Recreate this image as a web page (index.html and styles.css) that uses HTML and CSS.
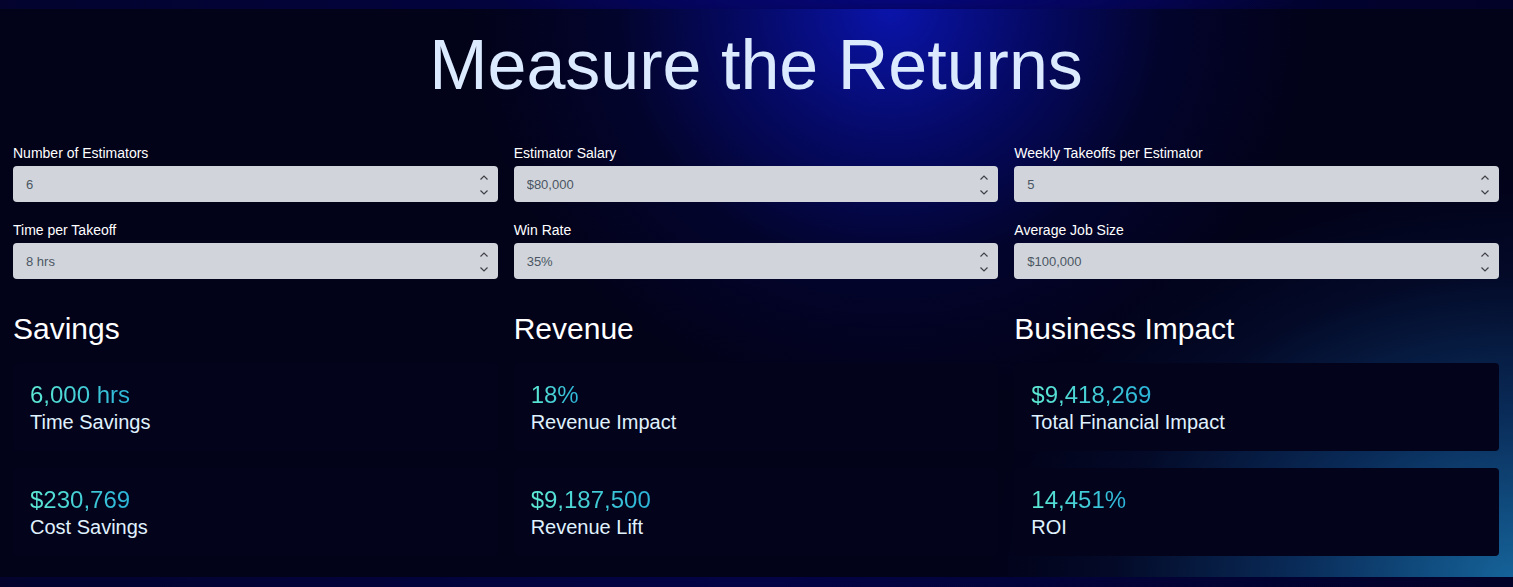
FILE: index.html
```html
<!DOCTYPE html>
<html lang="en">
<head>
<meta charset="utf-8">
<title>Measure the Returns</title>
<link rel="stylesheet" href="styles.css">
</head>
<body>
<section class="roi">
  <h1 class="title">Measure the Returns</h1>
  <div class="inputs">
    <label class="field"><span class="field-label">Number of Estimators</span>
      <span class="control"><input class="control-input" type="text" value="6" readonly><svg class="spin" width="10" height="26" viewBox="0 0 10 26"><path d="M1.5 8.5 L5 5 L8.5 8.5" /><path d="M1.5 19.5 L5 23 L8.5 19.5" /></svg></span></label>
    <label class="field"><span class="field-label">Estimator Salary</span>
      <span class="control"><input class="control-input" type="text" value="$80,000" readonly><svg class="spin" width="10" height="26" viewBox="0 0 10 26"><path d="M1.5 8.5 L5 5 L8.5 8.5" /><path d="M1.5 19.5 L5 23 L8.5 19.5" /></svg></span></label>
    <label class="field"><span class="field-label">Weekly Takeoffs per Estimator</span>
      <span class="control"><input class="control-input" type="text" value="5" readonly><svg class="spin" width="10" height="26" viewBox="0 0 10 26"><path d="M1.5 8.5 L5 5 L8.5 8.5" /><path d="M1.5 19.5 L5 23 L8.5 19.5" /></svg></span></label>
    <label class="field"><span class="field-label">Time per Takeoff</span>
      <span class="control"><input class="control-input" type="text" value="8 hrs" readonly><svg class="spin" width="10" height="26" viewBox="0 0 10 26"><path d="M1.5 8.5 L5 5 L8.5 8.5" /><path d="M1.5 19.5 L5 23 L8.5 19.5" /></svg></span></label>
    <label class="field"><span class="field-label">Win Rate</span>
      <span class="control"><input class="control-input" type="text" value="35%" readonly><svg class="spin" width="10" height="26" viewBox="0 0 10 26"><path d="M1.5 8.5 L5 5 L8.5 8.5" /><path d="M1.5 19.5 L5 23 L8.5 19.5" /></svg></span></label>
    <label class="field"><span class="field-label">Average Job Size</span>
      <span class="control"><input class="control-input" type="text" value="$100,000" readonly><svg class="spin" width="10" height="26" viewBox="0 0 10 26"><path d="M1.5 8.5 L5 5 L8.5 8.5" /><path d="M1.5 19.5 L5 23 L8.5 19.5" /></svg></span></label>
  </div>
  <div class="results">
    <div class="group">
      <h2 class="group-title">Savings</h2>
      <div class="card"><div class="card-value">6,000 hrs</div><div class="card-label">Time Savings</div></div>
      <div class="card"><div class="card-value">$230,769</div><div class="card-label">Cost Savings</div></div>
    </div>
    <div class="group">
      <h2 class="group-title">Revenue</h2>
      <div class="card"><div class="card-value">18%</div><div class="card-label">Revenue Impact</div></div>
      <div class="card"><div class="card-value">$9,187,500</div><div class="card-label">Revenue Lift</div></div>
    </div>
    <div class="group">
      <h2 class="group-title">Business Impact</h2>
      <div class="card"><div class="card-value">$9,418,269</div><div class="card-label">Total Financial Impact</div></div>
      <div class="card"><div class="card-value">14,451%</div><div class="card-label">ROI</div></div>
    </div>
  </div>
</section>
</body>
</html>
```

FILE: styles.css
```css
html, body {
  margin: 0;
  padding: 0;
}

body {
  font-family: "Liberation Sans", Arial, sans-serif;
  background:
    radial-gradient(ellipse 400px 30px at 900px 0, #06067a, transparent 100%),
    linear-gradient(to right, #03032e, #030346 50%, #020228);
  height: 587px;
  overflow: hidden;
  padding-top: 9px;
  box-sizing: border-box;
}

.roi {
  height: 568px;
  box-sizing: border-box;
  padding: 16px 14px 21px 13px;
  background:
    radial-gradient(ellipse 620px 470px at 100% 100%, rgba(22, 104, 160, 0.95) 0%, rgba(14, 70, 130, 0.6) 35%, rgba(6, 30, 80, 0.25) 65%, transparent 85%),
    radial-gradient(ellipse 420px 400px at 890px 0, rgba(10, 20, 170, 1) 0%, rgba(6, 12, 130, 0.7) 35%, rgba(4, 8, 80, 0.35) 65%, transparent 100%),
    #020219;
}

.title {
  margin: 0;
  text-align: center;
  font-weight: 400;
  font-size: 70px;
  line-height: 80px;
  color: #dbeafe;
}

.inputs {
  display: grid;
  grid-template-columns: repeat(3, 1fr);
  column-gap: 16px;
  row-gap: 20px;
  margin-top: 40px;
}

.field {
  display: flex;
  flex-direction: column;
  gap: 4px;
}

.field-label {
  font-size: 14px;
  line-height: 17px;
  color: #ffffff;
}

.control {
  display: flex;
  align-items: center;
  height: 36px;
  background: #d1d5db;
  border-radius: 4px;
  padding: 0 9px 0 13px;
}

.control-input {
  flex: 1;
  min-width: 0;
  border: 0;
  outline: none;
  background: transparent;
  font-family: "Liberation Sans", Arial, sans-serif;
  font-size: 13px;
  color: #4b5563;
  padding: 0;
}

.spin {
  flex: none;
  fill: none;
  stroke: #3f3f46;
  stroke-width: 1.2;
}

.results {
  display: grid;
  grid-template-columns: repeat(3, 1fr);
  column-gap: 16px;
  margin-top: 33px;
}

.group {
  display: flex;
  flex-direction: column;
  gap: 17px;
}

.group-title {
  margin: 0;
  font-weight: 400;
  font-size: 30px;
  line-height: 34px;
  color: #ffffff;
}

.card {
  height: 88px;
  box-sizing: border-box;
  padding: 18px 17px 0;
  background: #03031c;
  border-radius: 4px;
}

.card-value {
  display: inline-block;
  vertical-align: top;
  font-size: 24px;
  line-height: 28px;
  background: linear-gradient(to right, #5eead4, #2bb4d8);
  -webkit-background-clip: text;
  background-clip: text;
  color: transparent;
}

.card-label {
  margin-top: 2px;
  font-size: 20px;
  line-height: 23px;
  color: #e0f2fe;
}
```
